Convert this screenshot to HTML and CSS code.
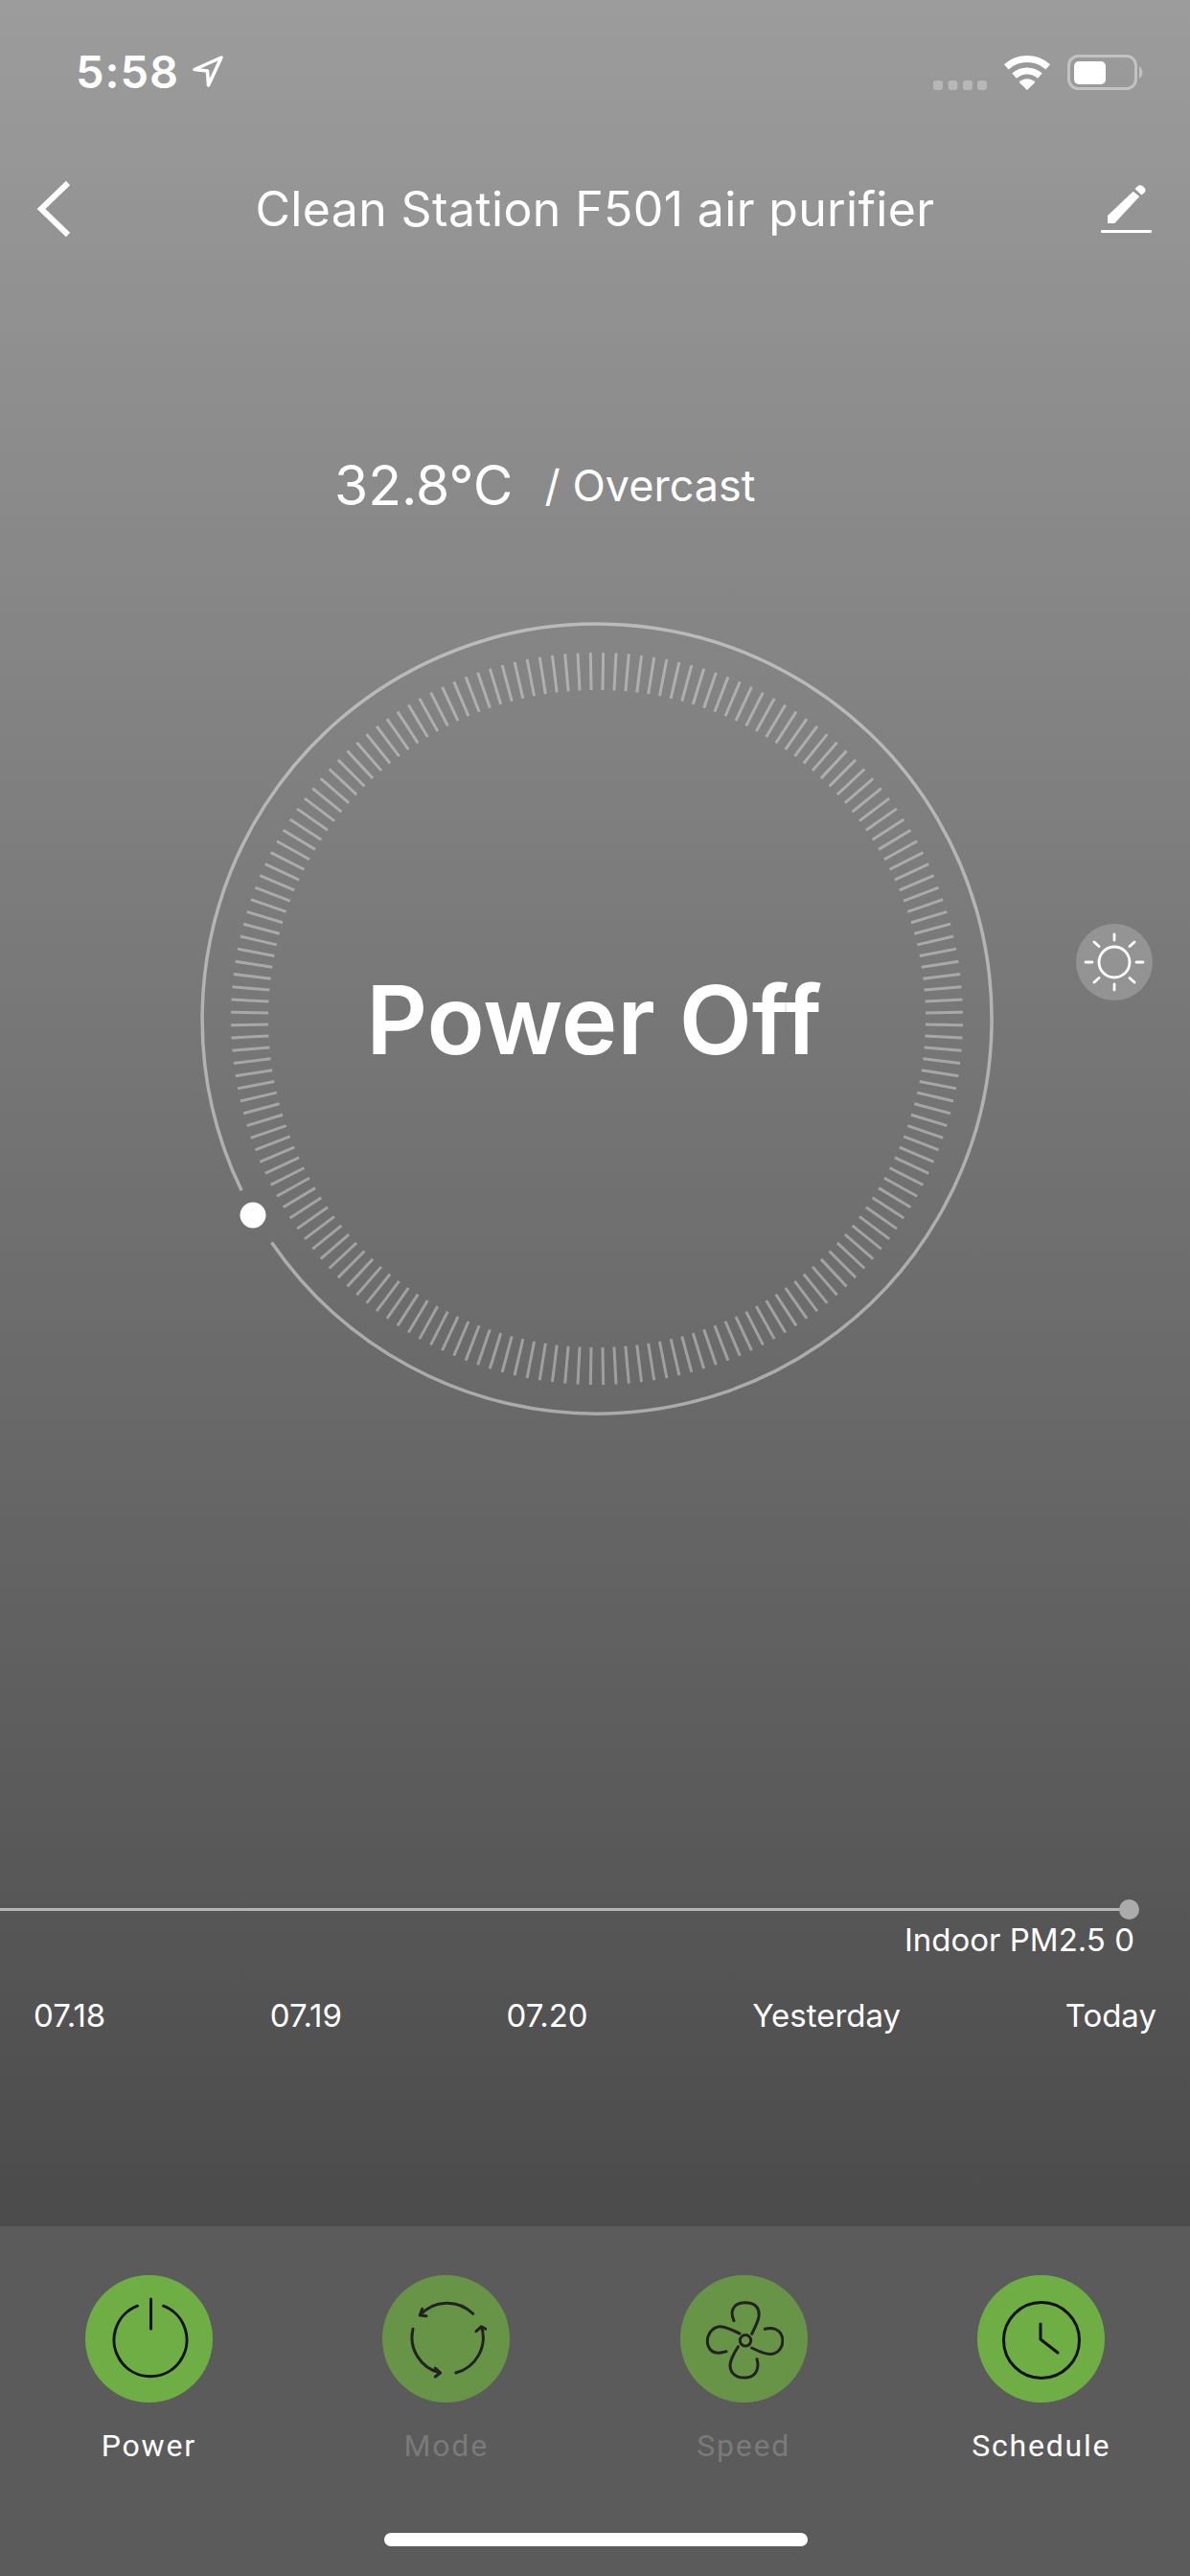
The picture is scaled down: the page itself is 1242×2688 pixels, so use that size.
FILE: index.html
```html
<!DOCTYPE html>
<html lang="en">
<head>
    <meta charset="UTF-8">
    <meta name="viewport" content="width=device-width, initial-scale=1.0">
    <title>Clean Station F501 air purifier</title>
    <link rel="stylesheet" href="styles.css">
</head>
<body>
    <div class="screen">
        <div class="status-bar">
            <div class="status-left">
                <span class="clock">5:58</span>
                <svg class="location" viewBox="0 0 34 34"><path d="M3 14.500 L31 2 L17.500 31 L16.500 16 Z" fill="none" stroke="#fff" stroke-width="3.500" stroke-linejoin="round"/></svg>
            </div>
            <div class="status-right">
                <svg class="signal" viewBox="0 0 56 10"><g fill="#fff" fill-opacity=".3"><rect x="0" y="0" width="10" height="10" rx="3"/><rect x="15.500" y="0" width="10" height="10" rx="3"/><rect x="31" y="0" width="10" height="10" rx="3"/><rect x="46" y="0" width="10" height="10" rx="3"/></g></svg>
                <svg class="wifi" viewBox="0 0 50 37"><path d="M3.300 12.800 A32.500 32.500 0 0 1 46.700 12.800 M11.600 22.100 A20 20 0 0 1 38.400 22.100" fill="none" stroke="#fff" stroke-width="7"/><path d="M25 37 L16.500 28.800 A12 12 0 0 1 33.500 28.800 Z" fill="#fff"/></svg>
                <svg class="battery" viewBox="0 0 80 37"><rect x="1.500" y="1.500" width="70" height="34" rx="10" fill="none" stroke="#fff" stroke-opacity=".4" stroke-width="3"/><rect x="7" y="7" width="33" height="24" rx="5" fill="#fff"/><path d="M75 12 A8 8 0 0 1 75 25 Z" fill="#fff" fill-opacity=".4"/></svg>
            </div>
        </div>

        <div class="nav-bar">
            <svg class="back" viewBox="0 0 40 60"><path d="M36 3 L8 30 L36 57" fill="none" stroke="#fff" stroke-width="6"/></svg>
            <h1 class="title">Clean Station F501 air purifier</h1>
            <svg class="edit" viewBox="0 0 53 50"><path d="M7 32 L33.700 6.700 L40.300 12 L14.300 40 L7 40 Z M35.500 4 L38 1.500 Q40.500 -0.500 43.500 1 L45.500 3 Q47.500 5.500 45.500 8 L42.500 10.500 Z" fill="#fff"/><rect x="0" y="47" width="53" height="3" rx="1" fill="#fff"/></svg>
        </div>

        <div class="weather">
            <span class="temp">32.8°C</span>
            <span class="condition">/ Overcast</span>
        </div>

        <div class="dial-row">
            <div class="dial">
                <svg class="dial-svg" viewBox="0 0 840 840">
                    <g id="ticks" stroke="#fff" stroke-opacity=".36" stroke-width="3"></g>
                    <path id="ring" fill="none" stroke="#fff" stroke-opacity=".44" stroke-width="3.500"/>
                    <circle cx="61" cy="625" r="13.500" fill="#fff"/>
                </svg>
                <div class="dial-label">Power Off</div>
            </div>
            <button class="sun-btn">
                <svg viewBox="0 0 80 80" fill="none" stroke="#fff" stroke-width="2.800" stroke-linecap="round"><circle cx="40" cy="40" r="16"/><path d="M40 11 V17 M40 63 V69 M10 40 H17 M63 40 H70 M19 19 L24 23.500 M61 19 L56 23.500 M19 61 L24 56.500 M61 61 L56 56.500"/></svg>
            </button>
        </div>

        <div class="chart">
            <div class="chart-line"><span class="chart-dot"></span></div>
            <div class="pm-value">Indoor PM2.5 0</div>
            <div class="dates">
                <span>07.18</span>
                <span>07.19</span>
                <span>07.20</span>
                <span>Yesterday</span>
                <span>Today</span>
            </div>
        </div>

        <div class="toolbar">
            <div class="tool">
                <div class="tool-icon">
                    <svg viewBox="0 0 84 88" fill="none" stroke="#111" stroke-width="3" stroke-linecap="round"><path d="M30.500 9.200 A38 38 0 1 0 57.500 9.200 M44.500 2 V33"/></svg>
                </div>
                <span class="tool-name">Power</span>
            </div>
            <div class="tool tool-off">
                <div class="tool-icon">
                    <svg viewBox="0 0 84 88" fill="none" stroke="#222" stroke-width="3" stroke-linecap="round" stroke-linejoin="round"><path d="M69.600 17.300 A38 38 0 0 0 14.200 19 M7 33.300 A38 38 0 0 0 35.600 79 M51.700 79 A38 38 0 0 0 78.500 30.700 M21 19.700 L14.200 19 L16.700 12.300 M30.300 74 L35.600 79 L30.300 83 M73 35.700 L78.500 30.700 L83 33.300"/></svg>
                </div>
                <span class="tool-name">Mode</span>
            </div>
            <div class="tool tool-off">
                <div class="tool-icon">
                    <svg viewBox="0 0 84 88" fill="none" stroke="#222" stroke-width="3" stroke-linecap="round" stroke-linejoin="round"><circle cx="44" cy="45.300" r="5.700"/><path d="M32 24.700 C28 16 30 6 43 5.700 C54 5.500 59 11 58 20 C57 27 53 33 50.700 38.300 M64.300 33.300 C72 31.500 80 33 82.500 42 C84.500 52 78 59 70 59.500 C63 59.500 57 56 50.700 53 M56 64.700 C58.500 73 56 83 45 84 C34 85 28 79 28 71 C28.500 64 33 57 36.400 51.700 M24 56.700 C16 59.500 8 59 4.800 50 C2.500 40 9 31.500 17 30.700 C24 30.500 31 35 37.900 38"/></svg>
                </div>
                <span class="tool-name">Speed</span>
            </div>
            <div class="tool">
                <div class="tool-icon">
                    <svg viewBox="0 0 84 88" fill="none" stroke="#111" stroke-width="3" stroke-linecap="round" stroke-linejoin="round"><circle cx="42" cy="45" r="39.500"/><path d="M41 28 V44 L59 58"/></svg>
                </div>
                <span class="tool-name">Schedule</span>
            </div>
            <div class="home-indicator"></div>
        </div>
    </div>
    <script src="script.js"></script>
</body>
</html>
```

FILE: styles.css
```css
html,body{margin:0;padding:0;}
body{font-family:Inter,"Liberation Sans",sans-serif;color:#fff;}
.screen{width:1242px;height:2688px;display:flex;flex-direction:column;overflow:hidden;background:linear-gradient(180deg,#9c9c9c 0,#4b4b4b 2323px);}

.status-bar{height:178px;display:flex;justify-content:space-between;align-items:flex-start;box-sizing:border-box;padding:50px 48px 0 79px;flex:none;}
.status-left{display:flex;align-items:center;gap:13px;}
.clock{font-size:47px;font-weight:600;line-height:50px;letter-spacing:1px;}
.location{width:34px;height:34px;}
.status-right{display:flex;align-items:flex-start;gap:17px;padding-top:7px;}
.signal{width:56px;height:10px;margin-top:27px;}
.wifi{width:50px;height:37px;}
.battery{width:80px;height:37px;}

.nav-bar{height:80px;display:grid;grid-template-columns:1fr auto 1fr;align-items:center;padding:0 40px;flex:none;}
.back{width:40px;height:60px;justify-self:start;margin-left:-5px;}
.title{margin:0;font-size:50px;font-weight:400;line-height:60px;white-space:nowrap;letter-spacing:0.35px;}
.edit{width:53px;height:50px;justify-self:end;}

.weather{margin-top:219px;height:60px;display:flex;align-items:center;gap:33px;padding-left:349px;flex:none;}
.temp{font-size:57px;line-height:60px;}
.condition{font-size:45px;line-height:60px;}

.dial-row{position:relative;margin-top:106px;height:840px;box-sizing:border-box;padding-left:4px;display:flex;justify-content:center;flex:none;}
.dial{position:relative;width:840px;height:840px;}
.dial-svg{display:block;width:840px;height:840px;}
.dial-label{position:absolute;left:-3px;right:3px;top:1px;height:840px;line-height:840px;text-align:center;font-size:99px;font-weight:600;white-space:nowrap;}
.sun-btn{position:absolute;left:1123px;top:321px;width:80px;height:80px;padding:0;border:none;border-radius:50%;background:rgba(255,255,255,0.2);}
.sun-btn svg{display:block;width:80px;height:80px;}

.chart{flex:1;display:flex;flex-direction:column;margin-top:508px;}
.chart-line{position:relative;height:3px;background:#b5b5b5;width:1179px;flex:none;}
.chart-dot{position:absolute;right:-10px;top:-9px;width:21px;height:21px;border-radius:50%;background:#ababab;}
.pm-value{font-size:33px;line-height:40px;text-align:right;padding-right:58px;margin-top:10px;}
.dates{display:flex;justify-content:space-between;padding:0 35px;font-size:33px;line-height:40px;margin-top:39px;}

.toolbar{position:relative;height:365px;flex:none;background:#5b5b5b;display:grid;grid-template-columns:repeat(4,1fr);box-sizing:border-box;padding-top:51px;font-family:Roboto,sans-serif;}
.tool{display:flex;flex-direction:column;align-items:center;}
.tool-icon{width:133px;height:133px;border-radius:50%;background:#6fae45;display:flex;align-items:center;justify-content:center;}
.tool-icon svg{width:84px;height:88px;}
.tool-off .tool-icon{background:#679446;}
.tool-name{margin-top:25px;font-size:32px;line-height:40px;letter-spacing:1.8px;}
.tool-off .tool-name{color:#7a7a7a;}
.home-indicator{position:absolute;left:401px;bottom:31px;width:442px;height:14px;border-radius:7px;background:#fff;}
```

FILE: script.js
```js
// dial centre in svg coords, page centre is 623,1063
const cx = 420, cy = 420;
const ticks = document.getElementById("ticks");
for (let i = 0; i < 180; i++) {
    const a = (i * 2 + 1) * Math.PI / 180;
    const line = document.createElementNS("http://www.w3.org/2000/svg", "line");
    line.setAttribute("x1", cx + 343 * Math.sin(a));
    line.setAttribute("y1", cy - 343 * Math.cos(a));
    line.setAttribute("x2", cx + 382 * Math.sin(a));
    line.setAttribute("y2", cy - 382 * Math.cos(a));
    ticks.appendChild(line);
}
// outer ring, open around the knob
const r = 412;
function pt(deg) {
    const a = deg * Math.PI / 180;
    return (cx + r * Math.sin(a)).toFixed(1) + " " + (cy - r * Math.cos(a)).toFixed(1);
}
document.getElementById("ring").setAttribute("d", "M" + pt(244.2) + " A" + r + " " + r + " 0 1 1 " + pt(235.5));
```
